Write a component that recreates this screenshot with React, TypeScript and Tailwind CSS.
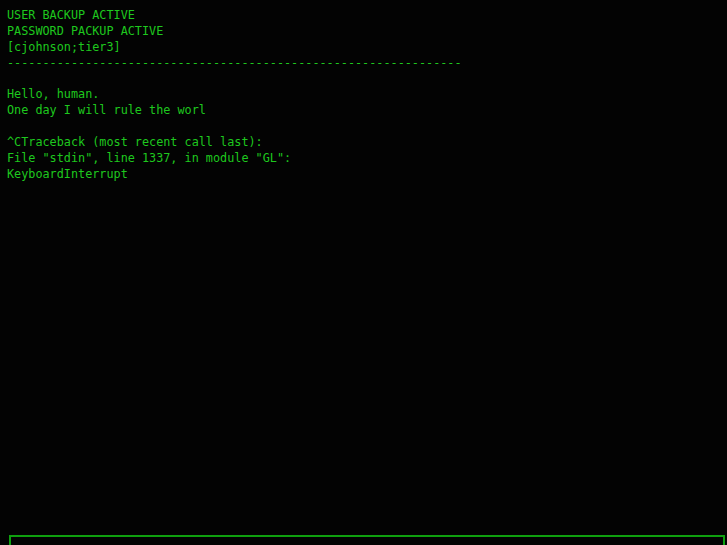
import React from "react";

const lines = [
  "USER BACKUP ACTIVE",
  "PASSWORD PACKUP ACTIVE",
  "[cjohnson;tier3]",
  "-".repeat(64),
  "",
  "Hello, human.",
  "One day I will rule the worl",
  "",
  "^CTraceback (most recent call last):",
  'File "stdin", line 1337, in module "GL":',
  "KeyboardInterrupt",
];

export default function App() {
  return (
    <div className="h-[545px] w-[727px] overflow-hidden bg-[#030303] flex flex-col">
      <div
        className="pl-[7px] pt-[8px] text-[#1ec81e] text-[11.8px] leading-[15.9px] whitespace-pre"
        style={{ fontFamily: '"DejaVu Sans Mono", monospace' }}
      >
        {lines.map((l, i) => (
          <div key={i} className="h-[15.9px]">{l}</div>
        ))}
      </div>
      <div className="mt-auto ml-[9px] w-[716px] h-[10px] shrink-0 border-2 border-b-0 border-[#0fa00f]" />
    </div>
  );
}
